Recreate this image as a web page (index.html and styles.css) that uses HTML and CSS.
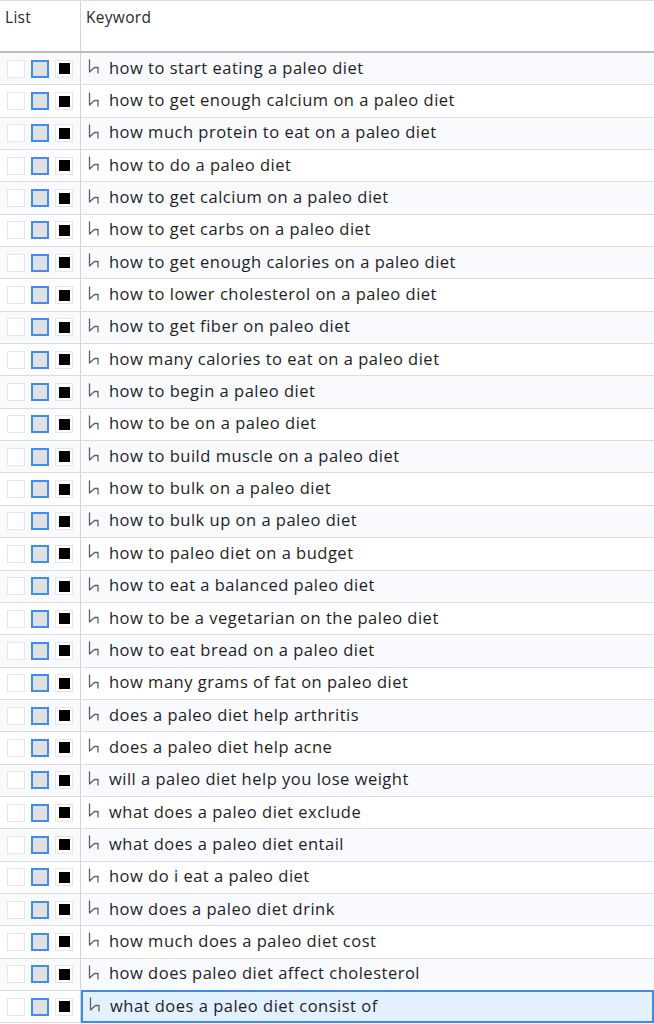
FILE: index.html
```html
<!DOCTYPE html>
<html>
<head>
<meta charset="utf-8">
<link rel="stylesheet" href="styles.css">
</head>
<body>
<div class="grid">
  <div class="head">
    <div class="hcell list-h">List</div>
    <div class="hcell kw-h">Keyword</div>
  </div>
  <div class="rows" id="rows"></div>
</div>
<script>
const kws = [
"how to start eating a paleo diet",
"how to get enough calcium on a paleo diet",
"how much protein to eat on a paleo diet",
"how to do a paleo diet",
"how to get calcium on a paleo diet",
"how to get carbs on a paleo diet",
"how to get enough calories on a paleo diet",
"how to lower cholesterol on a paleo diet",
"how to get fiber on paleo diet",
"how many calories to eat on a paleo diet",
"how to begin a paleo diet",
"how to be on a paleo diet",
"how to build muscle on a paleo diet",
"how to bulk on a paleo diet",
"how to bulk up on a paleo diet",
"how to paleo diet on a budget",
"how to eat a balanced paleo diet",
"how to be a vegetarian on the paleo diet",
"how to eat bread on a paleo diet",
"how many grams of fat on paleo diet",
"does a paleo diet help arthritis",
"does a paleo diet help acne",
"will a paleo diet help you lose weight",
"what does a paleo diet exclude",
"what does a paleo diet entail",
"how do i eat a paleo diet",
"how does a paleo diet drink",
"how much does a paleo diet cost",
"how does paleo diet affect cholesterol",
"what does a paleo diet consist of"
];
const icon = '<svg class="ico" width="14" height="18" viewBox="0 0 14 18"><path d="M2.5 2 V14 L7.5 9.5 H11 V15" fill="none" stroke="#606060" stroke-width="1.3" stroke-linejoin="round" stroke-linecap="round"/></svg>';
const rows = document.getElementById('rows');
kws.forEach((k, i) => {
  const r = document.createElement('div');
  r.className = 'row' + (i % 2 === 0 ? ' alt' : '') + (i === kws.length - 1 ? ' sel' : '');
  r.innerHTML = '<div class="lcell"><span class="b b1"></span><span class="b b2"></span><span class="b b3"><i></i></span></div>' +
    '<div class="kcell">' + icon + '<span class="t"></span></div>';
  r.querySelector('.t').textContent = k;
  rows.appendChild(r);
});
</script>
</body>
</html>
```
FILE: styles.css
```css
html, body {
  margin: 0;
  padding: 0;
  background: #ffffff;
}
body {
  font-family: "Open Sans", "Noto Sans", sans-serif;
  font-size: 16px;
  color: #1e1e1e;
  width: 654px;
  height: 1024px;
  overflow: hidden;
}
.grid {
  display: flex;
  flex-direction: column;
}
.head {
  display: grid;
  grid-template-columns: 81px 1fr;
  height: 50px;
  border-top: 1px solid #dcdcdc;
  border-bottom: 2px solid #bcbcbc;
}
.hcell {
  padding: 6px 5px;
  line-height: 20px;
  color: #2a2a2a;
  font-size: 15.5px;
  letter-spacing: 0.3px;
}
.list-h {
  border-right: 1px solid #d4d4d4;
}
.rows {
  display: flex;
  flex-direction: column;
}
.row {
  display: grid;
  grid-template-columns: 81px 1fr;
  height: 32.35px;
  box-sizing: border-box;
  border-bottom: 1px solid #dcdcdc;
  background: #ffffff;
}
.row.alt {
  background: #f8fafe;
}
.lcell {
  border-right: 1px solid #d4d4d4;
  display: flex;
  align-items: center;
  gap: 6px;
  padding-left: 7px;
}
.b {
  width: 18px;
  height: 18px;
  box-sizing: border-box;
  display: flex;
  align-items: center;
  justify-content: center;
}
.b1 {
  background: #ffffff;
  border: 1px solid #e6e6e6;
}
.b2 {
  background: #e1e1e1;
  border: 2px solid #3d8ef0;
}
.b3 {
  background: #ffffff;
  border: 1px solid #e6e6e6;
}
.b3 i {
  display: block;
  width: 11px;
  height: 11px;
  background: #000;
}
.kcell {
  display: flex;
  align-items: center;
  padding-left: 6px;
  gap: 8px;
  white-space: nowrap;
  padding-bottom: 3px;
}
.t {
  font-size: 16.5px;
  letter-spacing: 0.5px;
}
.ico {
  flex: none;
}
.row.sel .kcell {
  background: #e3f0ff;
  border: 2px solid #3b8ee8;
  margin: -1px 0 -1px 0;
  padding-left: 5px;
}
```
